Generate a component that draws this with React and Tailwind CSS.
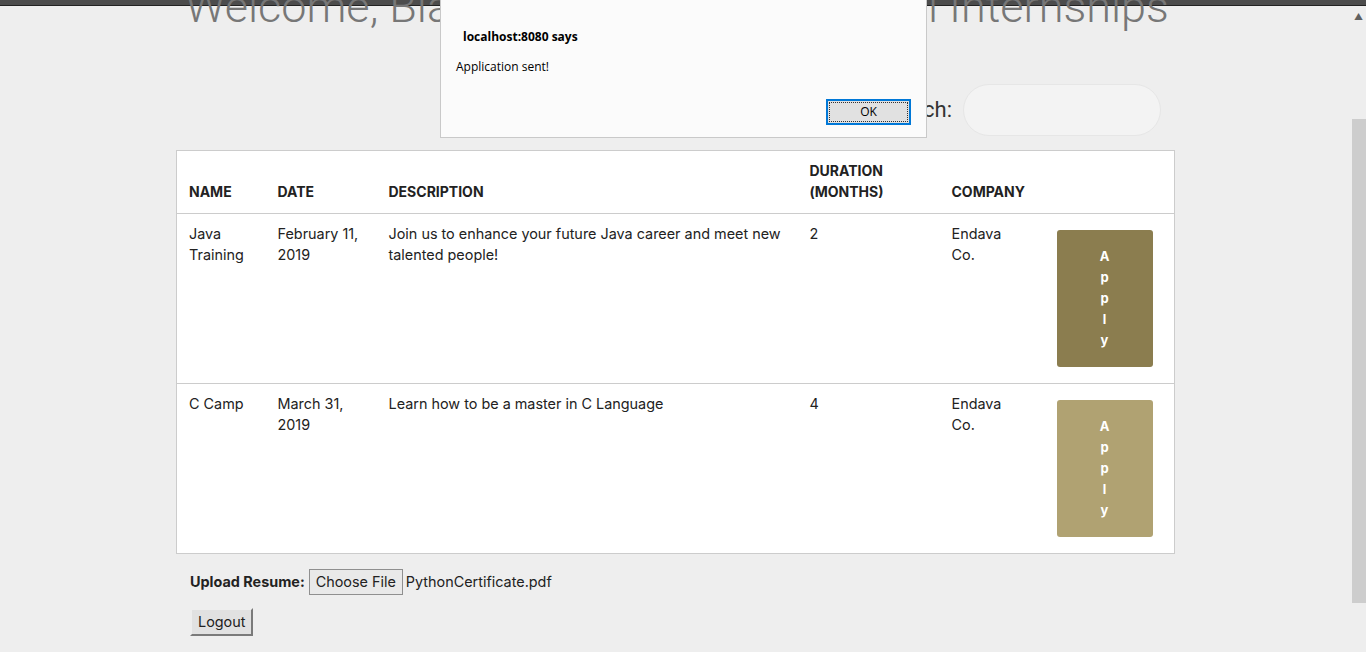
import React from 'react';

const internships = [
  {
    name: 'Java Training',
    date: 'February 11, 2019',
    description: 'Join us to enhance your future Java career and meet new talented people!',
    duration: '2',
    company: 'Endava Co.',
    tone: 'bg-[#8b7d4f]',
  },
  {
    name: 'C Camp',
    date: 'March 31, 2019',
    description: 'Learn how to be a master in C Language',
    duration: '4',
    company: 'Endava Co.',
    tone: 'bg-[#b0a272]',
  },
];

const ApplyButton = ({ tone }) => (
  <button className={`flex h-[137px] w-[96px] flex-col items-center justify-center rounded-[3px] text-[13px] font-bold leading-[21px] text-white ${tone}`}>
    {'Apply'.split('').map((ch, i) => (
      <span key={i}>{ch}</span>
    ))}
  </button>
);

const AlertDialog = () => (
  <div className="absolute left-[440px] top-[-1px] h-[139px] w-[487px] border border-[#c9c9c9] bg-[#fbfbfb] font-['Open_Sans',sans-serif] text-black">
    <div className="pl-[22px] pt-[28px] text-[12px] font-bold">localhost:8080 says</div>
    <div className="pl-[15px] pt-[12px] text-[12px]">Application sent!</div>
    <div className="absolute left-[385px] top-[99px] h-[26px] w-[85px] border-2 border-[#0078d7] bg-[#e1e1e1] p-[1px]">
      <div className="flex h-full w-full items-center justify-center border border-dotted border-[#333] text-[12px]">OK</div>
    </div>
  </div>
);

const App = () => {
  return (
    <div className="relative h-[652px] overflow-hidden bg-[#eeeeee] font-['Inter',sans-serif] text-[#222]">
      <div className="h-[6px] border-b border-[#222] bg-[#4c4c4c]" />
      <div className="flex">
        <div className="flex-1">
          <div className="ml-[176px] w-[998px]">
            <h1 className="mt-[-22px] whitespace-nowrap pl-[9px] font-['Roboto',sans-serif] text-[45px] font-light leading-none text-[#777]">
              Welcome, Bianca! Here you can see all Internships
            </h1>
            <div className="mt-[55px] flex items-center justify-end gap-[11px] pr-[13px]">
              <span className="font-['Roboto',sans-serif] text-[22px] leading-[22px] text-[#333]">Search:</span>
              <input className="h-[52px] w-[198px] rounded-full border border-[#e6e6e6] bg-[#f3f3f3] px-5 outline-none" />
            </div>
            <table className="mt-[14px] w-[998px] table-fixed border-collapse border border-[#cccccc] bg-white text-[14.4px] leading-[21px]">
              <colgroup>
                <col className="w-[89px]" />
                <col className="w-[111px]" />
                <col className="w-[421px]" />
                <col className="w-[142px]" />
                <col className="w-[105px]" />
                <col className="w-[130px]" />
              </colgroup>
              <thead>
                <tr className="border-b border-[#cccccc] text-left align-bottom text-[14px] font-bold uppercase">
                  <th className="px-3 pb-[11px] pt-[9px]">Name</th>
                  <th className="px-3 pb-[11px] pt-[9px]">Date</th>
                  <th className="px-3 pb-[11px] pt-[9px]">Description</th>
                  <th className="px-3 pb-[11px] pt-[9px]">Duration (Months)</th>
                  <th className="px-3 pb-[11px] pt-[9px]">Company</th>
                  <th className="px-3 pb-[11px] pt-[9px]"></th>
                </tr>
              </thead>
              <tbody>
                {internships.map((item) => (
                  <tr key={item.name} className="border-b border-[#cccccc] align-top">
                    <td className="px-3 pt-[9px]">{item.name}</td>
                    <td className="px-3 pt-[9px]">{item.date}</td>
                    <td className="px-3 pt-[9px]">{item.description}</td>
                    <td className="px-3 pt-[9px]">{item.duration}</td>
                    <td className="pl-3 pr-[28px] pt-[9px]">{item.company}</td>
                    <td className="px-3 py-4">
                      <ApplyButton tone={item.tone} />
                    </td>
                  </tr>
                ))}
              </tbody>
            </table>
            <div className="mt-[15px] flex items-center pl-[14px] text-[14.4px]">
              <span className="mr-[4px] font-bold">Upload Resume:</span>
              <button className="h-[26px] border border-[#8f8f8f] bg-[#e9e9e9] px-[6px]">Choose File</button>
              <span className="ml-[3px]">PythonCertificate.pdf</span>
            </div>
            <div className="mt-[13px] pl-[14px]">
              <button className="h-[28px] border-2 border-b-[#7a7a7a] border-l-[#eeeeee] border-r-[#7a7a7a] border-t-[#eeeeee] bg-[#e1e1e1] px-[6px] text-[14.4px]">
                Logout
              </button>
            </div>
          </div>
        </div>
        <div className="relative w-[15px] shrink-0 bg-[#eeeeee]">
          <div className="flex h-[15px] items-end justify-center text-[9px] leading-none text-[#606060]">▲</div>
          <div className="ml-[1px] mt-[98px] h-[484px] bg-[#cdcdcd]" />
        </div>
      </div>
      <AlertDialog />
    </div>
  );
};

export default App;
